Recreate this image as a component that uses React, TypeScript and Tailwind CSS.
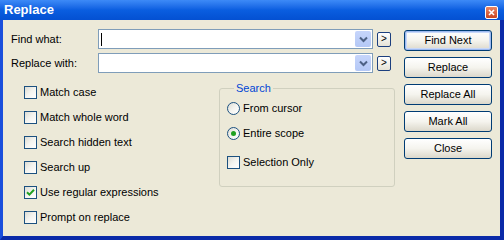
import React from "react";

const font = { fontFamily: '"Liberation Sans", Arial, sans-serif' };

const Check = ({ checked, label }: { checked?: boolean; label: string }) => (
  <div className="flex h-[25px] items-center gap-[3px]">
    <span className="flex h-[13px] w-[13px] items-center justify-center border border-[#1c5180] bg-gradient-to-br from-[#dcdcd4] via-[#f4f4f0] to-white">
      {checked && (
        <svg width="9" height="9" viewBox="0 0 9 9">
          <path d="M1 4.2 L3.4 6.6 L8 1.8" stroke="#21a121" strokeWidth="2" fill="none" />
        </svg>
      )}
    </span>
    <span className="text-[11px] text-black">{label}</span>
  </div>
);

const Radio = ({ checked, label }: { checked?: boolean; label: string }) => (
  <div className="flex h-[25px] items-center gap-[3px]">
    <span className="flex h-[13px] w-[13px] items-center justify-center rounded-full border border-[#1c5180] bg-gradient-to-br from-[#dcdcd4] via-[#f4f4f0] to-white">
      {checked && <span className="h-[5px] w-[5px] rounded-full bg-[#21a121]" />}
    </span>
    <span className="text-[11px] text-black">{label}</span>
  </div>
);

const Combo = ({ caret }: { caret?: boolean }) => (
  <div className="flex h-[20px] w-[275px] items-stretch border border-[#7f9db9] bg-white">
    <div className="flex flex-1 items-center pl-[2px]">
      {caret && <span className="h-[13px] w-px bg-black" />}
    </div>
    <div className="m-px flex w-[16px] items-center justify-center rounded-[2px] bg-gradient-to-b from-[#c6d5fb] to-[#b4c8f6]">
      <svg width="9" height="7" viewBox="0 0 9 7">
        <path d="M1 1.5 L4.5 5 L8 1.5" stroke="#4d6185" strokeWidth="2" fill="none" />
      </svg>
    </div>
  </div>
);

const Arrow = () => (
  <button className="flex h-[15px] w-[14px] items-center justify-center rounded-[2px] border border-[#1c3f7e] bg-gradient-to-b from-white to-[#e6e3d6] text-[10px] leading-none text-black">
    &gt;
  </button>
);

const Btn = ({ label, def }: { label: string; def?: boolean }) => (
  <button
    className={
      "h-[21px] w-[88px] rounded-[3px] border border-[#003c74] bg-gradient-to-b from-white via-[#f5f4ee] to-[#dcd8cb] text-[11px] font-normal text-black " +
      (def ? "shadow-[inset_0_0_0_1px_#9cb9f0,inset_0_0_0_2px_#c8d8f8]" : "")
    }
  >
    {label}
  </button>
);

export default function App() {
  return (
    <div style={font} className="flex h-[240px] w-[504px] flex-col bg-[#0b3ad7]">
      <div className="flex h-[20px] items-center justify-between bg-gradient-to-b from-[#3d8af7] via-[#0a5ee0] to-[#0450d2] pl-[4px] pr-[6px]">
        <span className="text-[13px] font-bold text-white">Replace</span>
        <span className="mt-[4px] flex h-[13px] w-[13px] items-center justify-center rounded-[2px] border border-white bg-gradient-to-b from-[#e98563] to-[#c9441f]">
          <svg width="7" height="7" viewBox="0 0 7 7">
            <path d="M1 1 L6 6 M6 1 L1 6" stroke="white" strokeWidth="1.6" />
          </svg>
        </span>
      </div>
      <div className="flex flex-1 border-b-[4px] border-l-[3px] border-r-[4px] border-b-[#0a2aa8] border-l-[#1a4fdc] border-r-[#0a2aa8] bg-[#ece9d8]">
        <div className="flex w-[392px] flex-col pl-[8px] pt-[9px]">
          <div className="flex items-center">
            <span className="w-[87px] text-[11px] text-black">Find what:</span>
            <Combo caret />
            <div className="ml-[4px]">
              <Arrow />
            </div>
          </div>
          <div className="mt-[4px] flex items-center">
            <span className="w-[87px] text-[11px] text-black">Replace with:</span>
            <Combo />
            <div className="ml-[4px]">
              <Arrow />
            </div>
          </div>
          <div className="mt-[7px] flex items-start">
            <div className="ml-[13px] flex w-[195px] flex-col">
              <Check label="Match case" />
              <Check label="Match whole word" />
              <Check label="Search hidden text" />
              <Check label="Search up" />
              <Check checked label="Use regular expressions" />
              <Check label="Prompt on replace" />
            </div>
            <fieldset className="mt-[2px] w-[176px] rounded-[3px] border border-[#d0d0bf] pb-[11px] pl-[7px]">
              <legend className="ml-[7px] px-[2px] text-[11px] leading-[13px] text-[#0046d5]">Search</legend>
              <div className="mt-[1px]">
                <Radio label="From cursor" />
                <Radio checked label="Entire scope" />
                <div className="mt-[4px]">
                  <Check label="Selection Only" />
                </div>
              </div>
            </fieldset>
          </div>
        </div>
        <div className="ml-[9px] flex flex-col gap-[6px] pt-[10px]">
          <Btn def label="Find Next" />
          <Btn label="Replace" />
          <Btn label="Replace All" />
          <Btn label="Mark All" />
          <Btn label="Close" />
        </div>
      </div>
    </div>
  );
}
